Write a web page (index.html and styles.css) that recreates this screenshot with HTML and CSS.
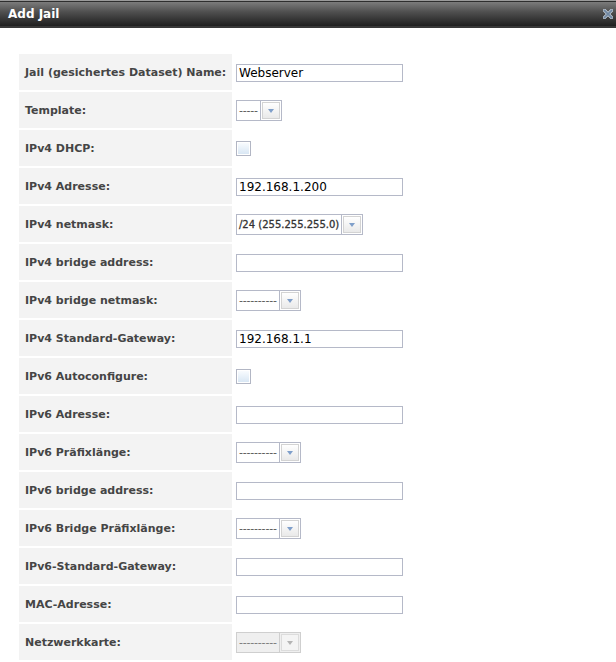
FILE: index.html
```html
<!DOCTYPE html>
<html lang="de">
<head>
  <meta charset="UTF-8">
  <meta name="viewport" content="width=device-width, initial-scale=1.0">
  <title>Add Jail</title>
  <link rel="stylesheet" href="styles.css">
</head>
<body>

  <div class="dialog">
    <div class="titlebar">
      <span class="title">Add Jail</span>
      <span class="close">
        <svg width="10" height="10" viewBox="0 0 10 10">
          <path d="M1.5 1.5 L8.5 8.5 M8.5 1.5 L1.5 8.5" stroke="#c9d3de" stroke-width="3.2" stroke-linecap="square"/>
          <path d="M1.5 1.5 L8.5 8.5 M8.5 1.5 L1.5 8.5" stroke="#6f86a0" stroke-width="1.8" stroke-linecap="square"/>
        </svg>
      </span>
    </div>

    <div class="form">
      <div class="row">
        <div class="label">Jail (gesichertes Dataset) Name:</div>
        <div class="field"><input class="text" type="text" value="Webserver"></div>
      </div>
      <div class="row">
        <div class="label">Template:</div>
        <div class="field">
          <div class="select"><span class="select-value">-----</span><span class="select-btn"><span class="arrow"></span></span></div>
        </div>
      </div>
      <div class="row">
        <div class="label">IPv4 DHCP:</div>
        <div class="field"><span class="check"></span></div>
      </div>
      <div class="row">
        <div class="label">IPv4 Adresse:</div>
        <div class="field"><input class="text" type="text" value="192.168.1.200"></div>
      </div>
      <div class="row">
        <div class="label">IPv4 netmask:</div>
        <div class="field">
          <div class="select"><span class="select-value small">/24 (255.255.255.0)</span><span class="select-btn"><span class="arrow"></span></span></div>
        </div>
      </div>
      <div class="row">
        <div class="label">IPv4 bridge address:</div>
        <div class="field"><input class="text" type="text" value=""></div>
      </div>
      <div class="row">
        <div class="label">IPv4 bridge netmask:</div>
        <div class="field">
          <div class="select"><span class="select-value">----------</span><span class="select-btn"><span class="arrow"></span></span></div>
        </div>
      </div>
      <div class="row">
        <div class="label">IPv4 Standard-Gateway:</div>
        <div class="field"><input class="text" type="text" value="192.168.1.1"></div>
      </div>
      <div class="row">
        <div class="label">IPv6 Autoconfigure:</div>
        <div class="field"><span class="check"></span></div>
      </div>
      <div class="row">
        <div class="label">IPv6 Adresse:</div>
        <div class="field"><input class="text" type="text" value=""></div>
      </div>
      <div class="row">
        <div class="label">IPv6 Präfixlänge:</div>
        <div class="field">
          <div class="select"><span class="select-value">----------</span><span class="select-btn"><span class="arrow"></span></span></div>
        </div>
      </div>
      <div class="row">
        <div class="label">IPv6 bridge address:</div>
        <div class="field"><input class="text" type="text" value=""></div>
      </div>
      <div class="row">
        <div class="label">IPv6 Bridge Präfixlänge:</div>
        <div class="field">
          <div class="select"><span class="select-value">----------</span><span class="select-btn"><span class="arrow"></span></span></div>
        </div>
      </div>
      <div class="row">
        <div class="label">IPv6-Standard-Gateway:</div>
        <div class="field"><input class="text" type="text" value=""></div>
      </div>
      <div class="row">
        <div class="label">MAC-Adresse:</div>
        <div class="field"><input class="text" type="text" value=""></div>
      </div>
      <div class="row">
        <div class="label">Netzwerkkarte:</div>
        <div class="field">
          <div class="select disabled"><span class="select-value">----------</span><span class="select-btn"><span class="arrow"></span></span></div>
        </div>
      </div>
    </div>
  </div>

</body>
</html>
```

FILE: styles.css
```css
body {
  margin: 0;
  padding: 0;
  background-color: #fff;
  font-family: "DejaVu Sans", Verdana, sans-serif;
}
.titlebar {
  height: 25px;
  border-top: 1px solid #9a9a9a;
  box-shadow: inset 0 1px 0 #2e2e2e;
  border-bottom: 2px solid #383838;
  background: linear-gradient(#808080, #4e4e4e 45%, #1f1f1f);
  display: flex;
  align-items: center;
  justify-content: space-between;
  padding: 0 3px 0 8px;
}
.title {
  color: #fff;
  font-weight: bold;
  font-size: 12px;
  padding-top: 1px;
}
.close {
  display: flex;
  width: 10px;
  height: 10px;
  margin-top: 1px;
}
.form {
  display: flex;
  flex-direction: column;
  gap: 2px;
  padding: 26px 0 0 19px;
}
.row {
  display: grid;
  grid-template-columns: 213px 1fr;
  column-gap: 4px;
  height: 36px;
}
.label {
  background-color: #f3f3f3;
  color: #454545;
  font-weight: bold;
  font-size: 11px;
  padding-left: 6px;
  padding-top: 1px;
  display: flex;
  align-items: center;
}
.field {
  display: flex;
  align-items: center;
}
.text {
  box-sizing: border-box;
  width: 167px;
  height: 18px;
  margin: 1px 0 0;
  padding: 0 2px;
  border: 1px solid #b5b9c8;
  border-radius: 0;
  font-family: "DejaVu Sans", Verdana, sans-serif;
  font-size: 12px;
  color: #000;
  outline: none;
}
.check {
  box-sizing: border-box;
  width: 15px;
  height: 15px;
  border: 1px solid #b2b6c4;
  box-shadow: inset 0 0 0 1px #fff;
  background: linear-gradient(#fbfdff, #d6e5f3);
  margin-top: 1px;
}
.select {
  display: flex;
  height: 21px;
  box-sizing: border-box;
  border: 1px solid #b5b9c8;
  background-color: #fff;
}
.select-value {
  display: flex;
  align-items: center;
  padding: 0 2px;
  font-size: 11px;
  color: #555;
  letter-spacing: -0.2px;
}
.select-value.small {
  font-size: 10px;
  color: #333;
  letter-spacing: 0;
  -webkit-text-stroke: 0.3px #333;
}
.select-btn {
  box-sizing: border-box;
  width: 21px;
  border-left: 1px solid #b5b9c8;
  padding: 1px;
  display: flex;
}
.arrow {
  flex: 1;
  border: 1px solid #d3d3d3;
  background: linear-gradient(#ffffff, #e9e9e9);
  position: relative;
}
.arrow::after {
  content: "";
  position: absolute;
  left: 5px;
  top: 6px;
  border-left: 3.5px solid transparent;
  border-right: 3.5px solid transparent;
  border-top: 4px solid #7f9fca;
}
.select.disabled {
  border-color: #cfcfcf;
  background-color: #efefef;
}
.select.disabled .select-value {
  color: #777;
}
.select.disabled .select-btn {
  border-left-color: #cfcfcf;
}
.select.disabled .arrow {
  background: #f4f4f4;
  border-color: #dcdcdc;
}
.select.disabled .arrow::after {
  border-top-color: #b4b4b4;
}
```
